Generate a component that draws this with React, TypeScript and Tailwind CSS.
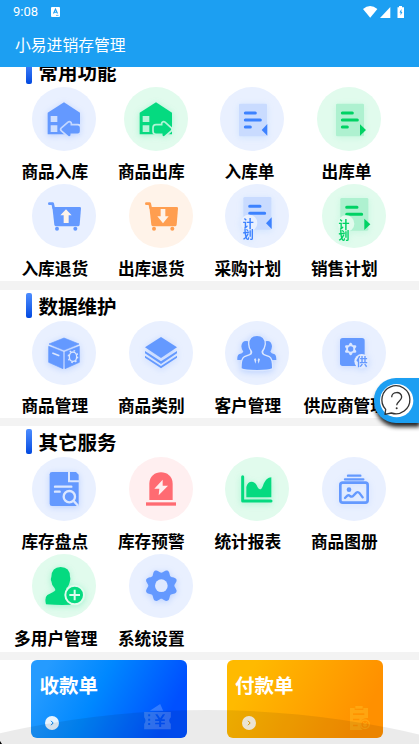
import type { ReactNode } from "react";

interface MenuItem {
  label: string;
  icon: ReactNode;
  // horizontal nudge of the round icon relative to its label
  shift?: string;
  labelShift?: string;
}

const BLUE = "#6499ff";
const BLUE_BG = "#e9f0ff";
const GREEN = "#05da80";
const GREEN_BG = "#e1fbed";

function Disc({ bg, glow, children }: { bg: string; glow?: string; children: ReactNode }) {
  return (
    <svg viewBox="0 0 192 192" className="block h-16 w-16">
      <circle cx="96" cy="96" r="96" fill={bg} />
      <g style={glow ? { filter: `drop-shadow(0 4px 10px ${glow})` } : undefined}>{children}</g>
    </svg>
  );
}

const blueGlow = "rgba(100,153,255,0.35)";
const greenGlow = "rgba(5,218,128,0.28)";

const ARROW_IN = "M92 127L112 110V119H137Q140 119 140 122V133Q140 136 137 136H112V144Z";
const ARROW_OUT = "M138 127L119 110V119H96Q93 119 93 122V133Q93 136 96 136H119V144Z";

function House({ color, bg, glow, out }: { color: string; bg: string; glow: string; out?: boolean }) {
  const arrow = out ? ARROW_OUT : ARROW_IN;
  const maskId = out ? "house-out" : "house-in";
  return (
    <Disc bg={bg} glow={glow}>
      <mask id={maskId} maskUnits="userSpaceOnUse" x="0" y="0" width="192" height="192">
        <rect width="192" height="192" fill="#fff" />
        <path d={arrow} fill="#000" stroke="#000" strokeWidth="17" strokeLinejoin="round" />
      </mask>
      <path d="M96 46L144 77V142H47V77Z" fill={color} mask={`url(#${maskId})`} />
      <path d="M56 87h20v18h-20zM56 115h20v20h-20z" fill={bg} opacity="0.8" />
      <path d={arrow} fill={color} stroke={color} strokeWidth="7" strokeLinejoin="round" />
    </Disc>
  );
}

function Sheet({ green, plan }: { green?: boolean; plan?: boolean }) {
  const bg = green ? GREEN_BG : BLUE_BG;
  const line = green ? "#00d264" : "#3d82ff";
  const dy = plan ? (green ? -8 : -11) : 0;
  return (
    <Disc bg={bg} glow={green ? "rgba(5,218,128,0.12)" : "rgba(100,180,255,0.18)"}>
      <g transform={plan ? `translate(-2 ${dy})` : undefined}>
        <rect x="57" y="50" width="84" height="98" rx="4" fill={green ? "#aef1d0" : "#c9dbff"} />
        <path
          d={plan ? "M76 78H107M76 99H121" : "M76 78H106M76 99H121M76 120H91"}
          stroke={line}
          strokeWidth="9"
          strokeLinecap="round"
        />
        <path d={green ? "M129 112V146L147 129Z" : "M142 111V146L125 129Z"} fill={line} />
      </g>
      {plan && (
        <>
          <circle cx="72" cy={green ? 119 : 117} r="25" fill={bg} />
          <text
            x={green ? 66 : 70}
            y={green ? 106 : 103}
            fill={line}
            fontSize="33"
            fontWeight="700"
            writingMode="vertical-rl"
            fontFamily="'Noto Sans CJK SC', sans-serif"
          >
            计划
          </text>
        </>
      )}
    </Disc>
  );
}

function Cart({ color, bg, down }: { color: string; bg: string; down?: boolean }) {
  return (
    <Disc bg={bg}>
      <path d="M52 59H62L65 72" stroke={color} strokeWidth="8" fill="none" strokeLinecap="round" strokeLinejoin="round" />
      <path d="M61 69H143Q147 69 147 73L143 122Q142 127 138 127H72Q68 127 67 122Z" fill={color} />
      <circle cx="75" cy="134" r="6" fill={color} />
      <circle cx="130" cy="134" r="6" fill={color} />
      <path
        d={down ? "M95 75H109V97H119L102 118L85 97H95Z" : "M102 76L119 94H110V117H95V94H85Z"}
        fill="#fff3e9"
      />
    </Disc>
  );
}

function gearPath(cx: number, cy: number, r: number, amp: number, teeth: number, phase = 0) {
  const pts: string[] = [];
  for (let i = 0; i < 120; i++) {
    const t = (i / 120) * Math.PI * 2;
    const d = r - amp * Math.cos(teeth * t + phase);
    pts.push(`${(cx + d * Math.cos(t)).toFixed(1)} ${(cy + d * Math.sin(t)).toFixed(1)}`);
  }
  return `M${pts.join("L")}Z`;
}

const boxIcon = (
  <Disc bg={BLUE_BG} glow={blueGlow}>
    <g fill={BLUE} stroke={BLUE} strokeWidth="2" strokeLinejoin="round">
      <path d="M96 51L141 69L96 87L51 69Z" />
      <path d="M50 76L93 93V143L50 124Z" />
      <path d="M99 93L142 76V124L99 143Z" />
    </g>
    <path d="M61 96L82 104" stroke="#dbe7ff" strokeWidth="5" />
    <ellipse cx="123" cy="107" rx="11" ry="14" fill="none" stroke="#dbe7ff" strokeWidth="4" />
    <ellipse cx="123" cy="107" rx="14" ry="18" fill="none" stroke="#dbe7ff" strokeWidth="4" strokeDasharray="5 7.6" />
  </Disc>
);

const layersIcon = (
  <Disc bg={BLUE_BG} glow={blueGlow}>
    <path d="M96 48L144 79L96 111L48 79Z" fill={BLUE} />
    <path d="M48 90L96 121L144 90V97L96 129L48 97Z" fill={BLUE} />
    <path d="M48 104L96 135L144 104V110L96 142L48 110Z" fill={BLUE} />
  </Disc>
);

const customersIcon = (
  <Disc bg={BLUE_BG} glow={blueGlow}>
    <g fill={BLUE}>
      <path d="M69 61Q51 57 49 76Q50 87 55 92Q53 97 42 100Q36 104 37 117H66L76 94Z" />
      <path d="M121 61Q139 57 141 76Q140 87 136 92Q138 97 149 100Q154 104 154 117H125L115 94Z" />
    </g>
    <path
      d="M96 45Q119 45 119 69Q117 83 110 90Q108 99 116 103L132 109Q141 113 141 142Q131 147 96 147Q60 147 50 142Q50 113 59 109L75 103Q84 99 81 90Q73 81 73 69Q73 45 96 45Z"
      fill={BLUE}
      stroke="#dbe7ff"
      strokeWidth="8"
      paintOrder="stroke"
    />
    <path d="M87 114L92 112L94 118L91 128ZM105 114L100 112L98 118L101 128Z" fill="#dbe7ff" />
  </Disc>
);

const supplierIcon = (
  <Disc bg={BLUE_BG} glow="rgba(100,153,255,0.25)">
    <rect x="54" y="51" width="74" height="84" rx="8" fill={BLUE} />
    <path d={gearPath(86, 84, 16, 3, 6, Math.PI)} fill="#dbe7ff" transform="rotate(30 86 84)" />
    <circle cx="86" cy="84" r="8" fill={BLUE} />
    <circle cx="119" cy="121" r="22" fill="#e1ebff" />
    <text
      x="120"
      y="134"
      fill={BLUE}
      fontSize="34"
      fontWeight="700"
      textAnchor="middle"
      fontFamily="'Noto Sans CJK SC', sans-serif"
    >
      供
    </text>
  </Disc>
);

const stockIcon = (
  <Disc bg={BLUE_BG} glow={blueGlow}>
    <path d="M60 45H132L140 53V147H60Q53 147 53 140V52Q53 45 60 45Z" fill={BLUE} />
    <g fill="none" stroke="#dbe7ff">
      <path d="M111 44V73H141" strokeWidth="6" />
      <path d="M69 89H118M69 104H83" strokeWidth="7" strokeLinecap="round" />
      <circle cx="112" cy="119" r="17" strokeWidth="7" fill={BLUE} />
      <path d="M124 131L139 147" strokeWidth="7" />
    </g>
  </Disc>
);

const alertIcon = (
  <Disc bg="#ffeff0">
    <path d="M61 129V80C61 34 131 34 131 80V129Z" fill="#ff6b72" />
    <rect x="51" y="136" width="90" height="10" fill="#ff6b72" />
    <path d="M101 68L76 95H91L89 115L117 86H101Z" fill="#ffeff0" />
  </Disc>
);

const chartIcon = (
  <Disc bg={GREEN_BG} glow={greenGlow}>
    <path d="M53 59V132H138" stroke={GREEN} strokeWidth="9" fill="none" strokeLinecap="round" strokeLinejoin="round" />
    <path d="M64 121V90C68 70 88 70 95 85C101 99 108 102 114 86C120 69 129 61 139 61V121Z" fill={GREEN} />
  </Disc>
);

const albumIcon = (
  <Disc bg={BLUE_BG} glow="rgba(100,153,255,0.2)">
    <g stroke={BLUE} fill="none" strokeLinecap="round" strokeLinejoin="round">
      <path d="M78 56H115M69 67H124" strokeWidth="7" />
      <rect x="55" y="77" width="82" height="60" rx="7" strokeWidth="8" />
      <path d="M69 123L76 116Q80 113 84 117Q90 122 95 115L103 107Q108 103 113 109L122 121" strokeWidth="7" />
    </g>
    <circle cx="81" cy="98" r="7" fill={BLUE} />
  </Disc>
);

const userAddIcon = (
  <Disc bg={GREEN_BG} glow={greenGlow}>
    <path
      d="M86 39Q114 39 114 69Q116 74 114 80Q111 97 103 102Q102 113 112 117L130 125V150Q105 155 42 151Q37 130 46 123Q66 114 70 109Q70 104 67 101Q59 94 58 82Q55 77 58 69Q59 39 86 39Z"
      fill={GREEN}
    />
    <circle cx="128" cy="123" r="28" fill={GREEN} stroke={GREEN_BG} strokeWidth="6" />
    <path d="M128 107V139M112 123H144" stroke={GREEN_BG} strokeWidth="6" />
  </Disc>
);

const settingsIcon = (
  <Disc bg={BLUE_BG} glow={blueGlow}>
    <path d={gearPath(97, 95, 44, 5, 8)} fill={BLUE} />
    <circle cx="97" cy="95" r="19" fill="#dfe9ff" />
  </Disc>
);

const common: MenuItem[] = [
  { label: "商品入库", icon: <House color={BLUE} bg={BLUE_BG} glow={blueGlow} /> },
  { label: "商品出库", shift: "ml-[20.5px]", icon: <House color={GREEN} bg={GREEN_BG} glow={greenGlow} out /> },
  { label: "入库单", shift: "ml-[20.5px]", labelShift: "pl-[3.5px]", icon: <Sheet /> },
  { label: "出库单", shift: "ml-[20.5px]", labelShift: "pl-[4.5px]", icon: <Sheet green /> },
  { label: "入库退货", icon: <Cart color={BLUE} bg={BLUE_BG} /> },
  { label: "出库退货", icon: <Cart color="#ff9e50" bg="#fff3e9" down /> },
  { label: "采购计划", icon: <Sheet plan /> },
  { label: "销售计划", icon: <Sheet green plan /> },
];

const data: MenuItem[] = [
  { label: "商品管理", icon: boxIcon },
  { label: "商品类别", icon: layersIcon },
  { label: "客户管理", icon: customersIcon },
  { label: "供应商管理", labelShift: "pl-[2px]", icon: supplierIcon },
];

const services: MenuItem[] = [
  { label: "库存盘点", icon: stockIcon },
  { label: "库存预警", icon: alertIcon },
  { label: "统计报表", icon: chartIcon },
  { label: "商品图册", icon: albumIcon },
  { label: "多用户管理", labelShift: "pl-[2px]", icon: userAddIcon },
  { label: "系统设置", icon: settingsIcon },
];

function SectionTitle({ children }: { children: string }) {
  return (
    <div className="flex h-[31px] items-center pl-[26px]">
      <span className="h-[25px] w-[6px] rounded-[2px] bg-linear-to-b from-[#4d8dff] to-[#0048e0]" />
      <h2 className="-mt-px ml-[6.5px] text-[19.5px] leading-[31px] font-bold">{children}</h2>
    </div>
  );
}

function Menu({ items }: { items: MenuItem[] }) {
  return (
    <div className="ml-[6.5px] grid grid-cols-[repeat(4,96.5px)]">
      {items.map((item) => (
        <div key={item.label} className="h-[97px]">
          <div className={item.shift ?? "ml-[25.5px]"}>{item.icon}</div>
          <div
            className={`mt-2 flex justify-center text-[16.7px] leading-6 font-bold whitespace-nowrap ${item.labelShift ?? ""}`}
          >
            {item.label}
          </div>
        </div>
      ))}
    </div>
  );
}

function Chevron({ color }: { color: string }) {
  return (
    <svg viewBox="0 0 14 14" className="h-[14px] w-[14px]">
      <circle cx="7" cy="7" r="7" fill="#fff" opacity="0.9" />
      <path d="M6 4.8L8.2 7L6 9.2" stroke={color} strokeWidth="1" fill="none" />
    </svg>
  );
}

export default function App() {
  return (
    <div className="relative flex h-[744px] w-[419px] flex-col overflow-hidden bg-white font-['Noto_Sans_CJK_SC',sans-serif] text-black">
      <header className="z-10 h-[67px] shrink-0 bg-[#1c9ff2] text-white">
        <div className="flex h-[23px] items-center pr-[14px] pl-[13px]">
          <span className="font-[Roboto,sans-serif] text-[13px] leading-none">9:08</span>
          <svg viewBox="0 0 9 10" className="ml-[13px] h-[10px] w-[9px]">
            <rect width="9" height="10" rx="1" fill="#fff" />
            <path d="M2.5 6.5L4.5 2L6.5 6.5M3.2 5.2H5.8" stroke="#1c9ff2" strokeWidth="1.1" fill="none" />
            <path d="M5 8.4H7.5" stroke="#1c9ff2" strokeWidth="0.7" />
          </svg>
          <svg viewBox="0 0 42 14" className="ml-auto h-[14px] w-[42px]">
            <path d="M0 4Q7 -1.8 14.4 4L7.2 12.7Z" fill="#fff" />
            <path d="M27.3 2V13H17Z" fill="#fff" />
            <path d="M36 1h3v1.2h2V13h-6.5V2.2H36z" fill="#fff" />
            <path d="M38.4 4L36.5 7.5H37.6V10.5L39.4 7H38.4Z" fill="#1c9ff2" />
          </svg>
        </div>
        <h1 className="pl-[15px] text-[15.8px] leading-[44px] font-normal">小易进销存管理</h1>
      </header>

      <main className="flex flex-1 flex-col">
        <section className="-mt-[11px] h-[225px] shrink-0">
          <SectionTitle>常用功能</SectionTitle>
          <Menu items={common} />
        </section>
        <div className="h-[9px] shrink-0 bg-[#f3f3f3]" />
        <section className="h-[128px] shrink-0">
          <SectionTitle>数据维护</SectionTitle>
          <Menu items={data} />
        </section>
        <div className="h-[8px] shrink-0 bg-[#f3f3f3]" />
        <section className="h-[226px] shrink-0">
          <SectionTitle>其它服务</SectionTitle>
          <Menu items={services} />
        </section>
        <div className="h-[8px] shrink-0 bg-[#f3f3f3]" />
        <section className="flex gap-[39.5px] pl-[31px] text-white">
          <div className="flex h-[78px] w-[156px] flex-col rounded-[6px] bg-[linear-gradient(117deg,#259bff_10%,#0088ff_42%,#0050ff_85%)] pt-[10px] pl-[8.5px]">
            <h3 className="text-[19.5px] leading-[30px] font-bold">收款单</h3>
            <div className="mt-[4px] flex items-start pl-[5.5px]">
              <span className="mt-[12px]"><Chevron color="#0080e8" /></span>
              <svg viewBox="0 0 80 78" className="ml-[85px] h-[26px] w-[27px] opacity-20">
                <path d="M17 20L48 0L57 20Z" fill="#fff" />
                <path
                  fillRule="evenodd"
                  d="M0 24H80V40Q70 50 80 60V76H0V60Q8 50 0 40ZM12 31V37H18V31ZM12 44V50H18V44ZM12 57V63H18V57ZM33 31L43 46H33V51H45V56H33V61H45V69H51V61H62V56H51V51H62V46H53L63 31H56L48 43L40 31Z"
                  fill="#fff"
                />
              </svg>
            </div>
          </div>
          <div className="flex h-[78px] w-[156px] flex-col rounded-[6px] bg-[linear-gradient(117deg,#ffba00_15%,#ff9000_85%)] pt-[10px] pl-[8.5px]">
            <h3 className="text-[19.5px] leading-[30px] font-bold">付款单</h3>
            <div className="mt-[6px] flex items-start pl-[7px]">
              <span className="mt-[10px]"><Chevron color="#e6a000" /></span>
              <svg viewBox="0 0 60 75" className="ml-[94px] h-[25px] w-[20px] opacity-50">
                <path
                  fillRule="evenodd"
                  d="M0 6H14V12H40V6H54V36Q32 34 30 56Q31 66 38 72H0ZM9 22V27H43V22ZM9 38V43H28V38ZM9 56V61H23V56Z"
                  fill="#ffba20"
                />
                <path d="M16 0H38V8H16Z" fill="#ffba20" />
                <circle cx="45" cy="55" r="13" fill="none" stroke="#ffba20" strokeWidth="4" />
                <path d="M39 47L45 54L51 47M45 54V64M39 54H51M39 59H51" stroke="#ffba20" strokeWidth="3" fill="none" />
              </svg>
            </div>
          </div>
        </section>
      </main>

      {/* curved shade over the bottom edge */}
      <svg viewBox="0 0 419 34" className="absolute bottom-0 left-0 h-[34px] w-[419px]">
        <circle cx="207" cy="930" r="930" fill="#000" opacity="0.08" />
        <path d="M0 31L2 34H0Z" fill="#000" />
      </svg>

      {/* floating help button */}
      <button className="absolute top-[378px] right-0 h-[45px] w-[45px] rounded-l-[22px] bg-[#1c9ff2] shadow-[1px_4px_4px_rgba(0,0,0,0.85)]">
        <svg viewBox="0 0 135 135" className="h-[45px] w-[45px]">
          <circle cx="68" cy="68" r="50" fill="#fff" />
          <path
            d="M35 94A42 42 0 1 1 52 105L33 109Z"
            fill="none"
            stroke="#333"
            strokeWidth="4"
            strokeLinejoin="round"
          />
          <path d="M53 58C53 39 83 39 83 57C83 69 68 70 68 82" fill="none" stroke="#333" strokeWidth="4" />
          <circle cx="68" cy="91" r="3" fill="#333" />
        </svg>
      </button>
    </div>
  );
}
